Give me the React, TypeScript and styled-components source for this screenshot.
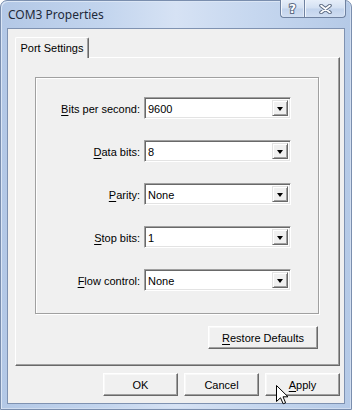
import React from 'react';
import styled, { createGlobalStyle } from 'styled-components';

const GlobalStyle = createGlobalStyle`
  html, body {
    margin: 0;
    padding: 0;
    background: #fff;
  }
  body {
    font-family: "Liberation Sans", Arial, sans-serif;
    font-size: 11px;
    color: #000;
  }
`;

// Window frame (Aero basic look)
const Window = styled.div`
  position: relative;
  width: 352px;
  height: 410px;
  box-sizing: border-box;
  display: flex;
  flex-direction: column;
  padding: 0 6px 5px 6px;
  border: 1px solid #7a8eae;
  border-radius: 7px 7px 0 0;
  background: linear-gradient(90deg, #b3c8e6 0%, #c3d5ee 30%, #d6e2f4 50%, #c6d7ef 72%, #b5cae7 100%);
  box-shadow: inset 1px 1px 0 #dbe6f5, inset -1px -1px 0 #d0ddf0;
`;

const TitleBar = styled.div`
  height: 27px;
  display: flex;
  justify-content: space-between;
  align-items: flex-start;
`;

const Title = styled.div`
  font-family: "Noto Sans", "Open Sans", sans-serif;
  font-size: 12px;
  line-height: 27px;
  padding-left: 1px;
  color: #1e2a3a;
`;

const CaptionButtons = styled.div`
  display: flex;
  margin-top: -1px;
  margin-right: -1px;
`;

const CaptionButton = styled.div<{ $w: number; $side: 'left' | 'right' }>`
  width: ${p => p.$w}px;
  height: 18px;
  box-sizing: border-box;
  display: flex;
  align-items: center;
  justify-content: center;
  border: 1px solid #6f82a1;
  border-top: none;
  ${p => (p.$side === 'left' ? 'border-right: none;' : '')}
  border-radius: ${p => (p.$side === 'left' ? '0 0 0 4px' : '0 0 4px 0')};
  background: linear-gradient(#e6eef9 0%, #d3e0f2 48%, #c2d3ec 52%, #d0def2 100%);
  box-shadow: inset 1px 0 0 #f2f6fc, inset -1px 0 0 #e0e9f6;
`;

const HelpGlyph = styled.span`
  font-family: "DejaVu Sans", sans-serif;
  font-weight: bold;
  font-size: 12px;
  line-height: 12px;
  color: #fff;
  -webkit-text-stroke: 2px #5d6c84;
  paint-order: stroke fill;
`;

const Client = styled.div`
  flex: 1;
  display: flex;
  flex-direction: column;
  background: #f0f0f0;
  border: 1px solid #7f92b1;
  padding: 8px 4px 0 7px;
`;

const TabStrip = styled.div`
  display: flex;
  height: 20px;
`;

const Tab = styled.div`
  position: relative;
  z-index: 1;
  width: 74px;
  height: 21px;
  box-sizing: border-box;
  display: flex;
  align-items: center;
  justify-content: center;
  padding-bottom: 1px;
  background: #f0f0f0;
  border: 1px solid;
  border-color: #fff #696969 transparent #fff;
  border-bottom: none;
  border-radius: 2px 2px 0 0;
  box-shadow: inset -1px 0 0 #a0a0a0;
`;

const Panel = styled.div`
  width: 325px;
  height: 309px;
  box-sizing: border-box;
  display: flex;
  flex-direction: column;
  padding: 19px 21px 0 19px;
  border: 1px solid;
  border-color: #fff #696969 #696969 #fff;
  box-shadow: inset -1px -1px 0 #a0a0a0;
`;

const GroupBox = styled.div`
  width: 284px;
  height: 237px;
  box-sizing: border-box;
  border: 1px solid #a0a0a0;
  box-shadow: inset 1px 1px 0 #fff, 1px 1px 0 #fff;
  display: grid;
  grid-template-columns: 104px 147px;
  grid-auto-rows: 22px;
  column-gap: 4px;
  row-gap: 21px;
  padding-top: 19px;
  align-content: start;
`;

const Label = styled.div`
  display: flex;
  align-items: center;
  justify-content: flex-end;
  padding-top: 1px;
  white-space: nowrap;
`;

const Key = styled.span`
  text-decoration: underline;
  text-underline-offset: 2px;
`;

const Combo = styled.div`
  display: flex;
  align-items: center;
  height: 22px;
  box-sizing: border-box;
  background: #fff;
  border: 1px solid;
  border-color: #a0a0a0 #fff #fff #a0a0a0;
  box-shadow: inset 1px 1px 0 #696969, inset -1px -1px 0 #e3e3e3;
`;

const ComboValue = styled.div`
  flex: 1;
  padding-left: 3px;
  padding-top: 1px;
`;

const DropButton = styled.div`
  width: 16px;
  height: 16px;
  margin-right: 2px;
  box-sizing: border-box;
  display: flex;
  align-items: center;
  justify-content: center;
  background: #f0f0f0;
  border: 1px solid;
  border-color: #e3e3e3 #696969 #696969 #e3e3e3;
  box-shadow: inset 1px 1px 0 #fff, inset -1px -1px 0 #a0a0a0;
`;

const Arrow = styled.div`
  width: 0;
  height: 0;
  border-left: 3.5px solid transparent;
  border-right: 3.5px solid transparent;
  border-top: 4px solid #000;
  margin-top: 1px;
`;

const PanelActions = styled.div`
  display: flex;
  justify-content: flex-end;
  margin-top: 12px;
`;

const Footer = styled.div`
  display: flex;
  justify-content: flex-end;
  gap: 6px;
  margin-top: 7px;
  width: 325px;
`;

const Button = styled.div<{ $w: number }>`
  width: ${p => p.$w}px;
  height: 23px;
  box-sizing: border-box;
  display: flex;
  align-items: center;
  justify-content: center;
  background: #f0f0f0;
  border: 1px solid;
  border-color: #fff #696969 #696969 #fff;
  box-shadow: inset -1px -1px 0 #a0a0a0, inset 1px 1px 0 #f8f8f8;
`;

const Cursor = styled.svg`
  position: absolute;
  left: 275px;
  top: 384px;
`;

const rows: { label: React.ReactNode; value: string }[] = [
  { label: <><Key>B</Key>its per second:</>, value: '9600' },
  { label: <><Key>D</Key>ata bits:</>, value: '8' },
  { label: <><Key>P</Key>arity:</>, value: 'None' },
  { label: <><Key>S</Key>top bits:</>, value: '1' },
  { label: <><Key>F</Key>low control:</>, value: 'None' },
];

export default function App() {
  return (
    <>
      <GlobalStyle />
      <Window>
        <TitleBar>
          <Title>COM3 Properties</Title>
          <CaptionButtons>
            <CaptionButton $w={24} $side="left">
              <HelpGlyph>?</HelpGlyph>
            </CaptionButton>
            <CaptionButton $w={42} $side="right">
              <svg width="13" height="10" viewBox="0 0 13 10">
                <path d="M2 1.5 L11 8.5 M11 1.5 L2 8.5" stroke="#5d6c84" strokeWidth="3.6" strokeLinecap="round" />
                <path d="M2 1.5 L11 8.5 M11 1.5 L2 8.5" stroke="#fff" strokeWidth="1.6" strokeLinecap="round" />
              </svg>
            </CaptionButton>
          </CaptionButtons>
        </TitleBar>
        <Client>
          <TabStrip>
            <Tab>Port Settings</Tab>
          </TabStrip>
          <Panel>
            <GroupBox>
              {rows.map((r, i) => (
                <React.Fragment key={i}>
                  <Label>{r.label}</Label>
                  <Combo>
                    <ComboValue>{r.value}</ComboValue>
                    <DropButton>
                      <Arrow />
                    </DropButton>
                  </Combo>
                </React.Fragment>
              ))}
            </GroupBox>
            <PanelActions>
              <Button $w={110}>
                <span><Key>R</Key>estore Defaults</span>
              </Button>
            </PanelActions>
          </Panel>
          <Footer>
            <Button $w={75}>OK</Button>
            <Button $w={75}>Cancel</Button>
            <Button $w={75}>
              <span><Key>A</Key>pply</span>
            </Button>
          </Footer>
        </Client>
        <Cursor width="13" height="20" viewBox="0 0 13 20">
          <path d="M0.5 0.5 L0.5 16.5 L4.5 12.8 L7.2 18.8 L9.6 17.8 L7 11.8 L12 11.8 Z" fill="#fff" stroke="#000" strokeWidth="1" strokeLinejoin="miter" />
        </Cursor>
      </Window>
    </>
  );
}
